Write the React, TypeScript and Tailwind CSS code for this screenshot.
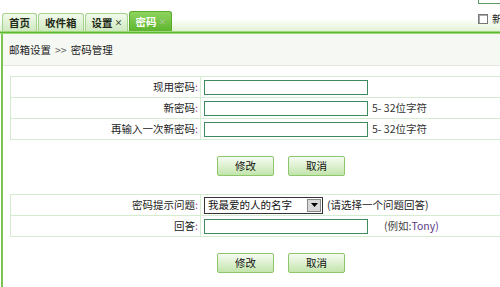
import React from "react";

const font = { fontFamily: '"Noto Sans CJK SC", "Liberation Sans", sans-serif' };

function Tab({ label, close, active }: { label: string; close?: boolean; active?: boolean }) {
  if (active) {
    return (
      <div className="flex h-[20px] items-center gap-[2px] rounded-t-[3px] border border-b-0 border-[#5aab2c] bg-gradient-to-b from-[#8fd45e] to-[#5db52c] pl-[6px] pr-[4px] text-[10.5px] font-bold text-white">
        <span>{label}</span>
        {close && <span className="text-[8px] font-bold text-[#a8c898]">×</span>}
      </div>
    );
  }
  return (
    <div className={`flex h-[18px] items-center gap-[2px] rounded-t-[3px] border border-b-0 border-[#a6d38c] bg-gradient-to-b from-[#f2faec] to-[#cfe9bf] text-[10.5px] font-bold text-[#1e2a16] ${close ? "pl-[6px] pr-[4px]" : "px-[6px]"}`}>
      <span>{label}</span>
      {close && <span className="text-[8px] font-bold text-[#3a4a30]">×</span>}
    </div>
  );
}

function Label({ text }: { text: string }) {
  return (
    <span className="text-[#222]">
      {text}
      <span className="text-[#b0409a]">:</span>
    </span>
  );
}

function Btn({ text }: { text: string }) {
  return (
    <button className="h-[20px] w-[57px] rounded-[2px] border border-[#8ec66c] bg-gradient-to-b from-[#f6fbf2] to-[#c3e5ac] text-[10.5px] text-[#111]">
      {text}
    </button>
  );
}

function Input() {
  return <div className="h-[15px] w-[164px] border border-[#3d8a5e] bg-white" />;
}

export default function App() {
  return (
    <div style={font} className="relative h-[287px] w-[500px] overflow-hidden bg-white text-[10.5px]">
      {/* top-right partial controls */}
      <div className="absolute left-[478px] top-[-12px] h-[16px] w-[40px] border border-[#5c9a64] bg-white" />
      <div className="absolute left-[478px] top-[11px] flex items-center gap-[4px]">
        <div className="h-[10px] w-[10px] border border-[#777] bg-white shadow-[inset_1px_1px_0_#aaa]" />
        <span className="text-[10.5px] text-[#222]">新</span>
      </div>

      {/* tab strip */}
      <div className="flex h-[31px] items-end gap-[1px] bg-gradient-to-b from-white from-60% to-[#e2f3d6] pl-[2px]">
        <Tab label="首页" />
        <Tab label="收件箱" />
        <Tab label="设置" close />
        <Tab label="密码" close active />
      </div>
      <div className="h-[3px] border-y border-[#9fd77c] bg-[#5cb82c]" />

      {/* main */}
      <div className="ml-[1px] h-[260px] border-l-2 border-[#7cc452]">
        <div className="flex h-[32px] items-center border-b border-[#e4e6e2] bg-[#f6f8f3] pl-[6px] text-[#222]">
          邮箱设置 <span className="mx-[4px] text-[#555]">&gt;&gt;</span> 密码管理
        </div>

        <div className="pl-[7px] pt-[10px]">
          <table className="w-[492px] border-collapse">
            <tbody>
              <tr className="h-[21px]">
                <td className="w-[190px] border border-[#d6ecd0] pr-[2px] text-right">
                  <Label text="现用密码" />
                </td>
                <td className="border border-[#d6ecd0] pl-[3px]">
                  <Input />
                </td>
              </tr>
              <tr className="h-[21px]">
                <td className="border border-[#d6ecd0] pr-[2px] text-right">
                  <Label text="新密码" />
                </td>
                <td className="border border-[#d6ecd0] pl-[3px]">
                  <div className="flex items-center gap-[4px]">
                    <Input />
                    <span className="text-[#333]">5- 32位字符</span>
                  </div>
                </td>
              </tr>
              <tr className="h-[21px]">
                <td className="border border-[#d6ecd0] pr-[2px] text-right">
                  <Label text="再输入一次新密码" />
                </td>
                <td className="border border-[#d6ecd0] pl-[3px]">
                  <div className="flex items-center gap-[4px]">
                    <Input />
                    <span className="text-[#333]">5- 32位字符</span>
                  </div>
                </td>
              </tr>
            </tbody>
          </table>

          <div className="flex gap-[14px] pl-[207px] pt-[16px]">
            <Btn text="修改" />
            <Btn text="取消" />
          </div>

          <table className="mt-[18px] w-[492px] border-collapse">
            <tbody>
              <tr className="h-[21px]">
                <td className="w-[190px] border border-[#d6ecd0] pr-[2px] text-right">
                  <Label text="密码提示问题" />
                </td>
                <td className="border border-[#d6ecd0] pl-[3px]">
                  <div className="flex items-center gap-[4px]">
                    <div className="flex h-[17px] w-[119px] items-center justify-between border border-[#333] bg-white pl-[3px] pr-[1px] text-[#111]">
                      <span className="leading-none">我最爱的人的名字</span>
                      <div className="flex h-[13px] w-[14px] items-center justify-center border border-[#888] bg-[#d8d8d8]">
                        <svg width="7" height="4" viewBox="0 0 7 4">
                          <polygon points="0,0 7,0 3.5,4" fill="#000" />
                        </svg>
                      </div>
                    </div>
                    <span className="text-[#222]">(请选择一个问题回答)</span>
                  </div>
                </td>
              </tr>
              <tr className="h-[21px]">
                <td className="border border-[#d6ecd0] pr-[2px] text-right">
                  <Label text="回答" />
                </td>
                <td className="border border-[#d6ecd0] pl-[3px]">
                  <div className="flex items-center gap-[16px]">
                    <Input />
                    <span className="text-[#444]">
                      (例如:<span className="text-[#5a3a86]">Tony)</span>
                    </span>
                  </div>
                </td>
              </tr>
            </tbody>
          </table>

          <div className="flex gap-[14px] pl-[207px] pt-[16px]">
            <Btn text="修改" />
            <Btn text="取消" />
          </div>
        </div>
      </div>
    </div>
  );
}
